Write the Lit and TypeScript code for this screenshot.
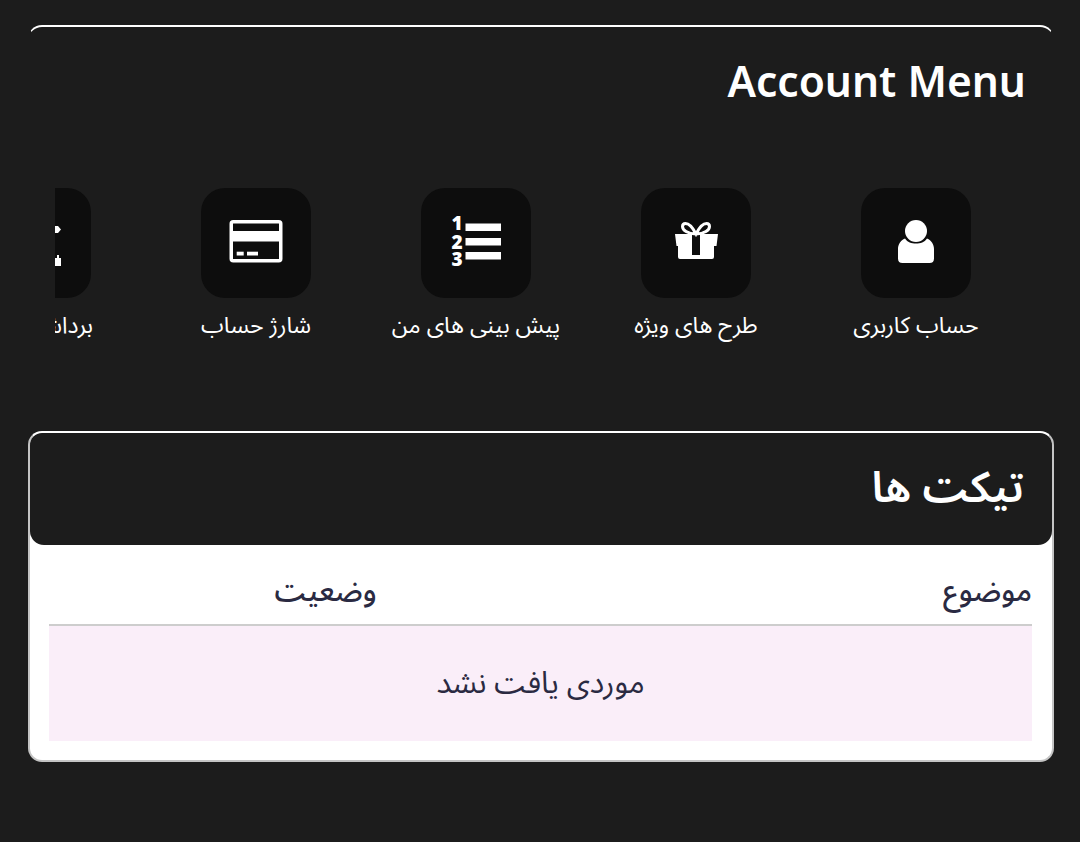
import { LitElement, html, css, svg } from "lit";
import { customElement } from "lit/decorators.js";

const userIcon = svg`<svg class="ic" width="110" height="110" viewBox="0 0 110 110"><circle cx="55" cy="43" r="11" fill="#fff"/><path d="M44 50.500C46.500 54.500 50.500 55.500 55 55.500s8.500-1 11-5C70.500 52.500 73 56.500 73 61v9.500c0 3-1.500 4.500-4.500 4.500h-27c-3 0-4.500-1.500-4.500-4.500V61c0-4.500 2.500-8.500 7-10.500z" fill="#fff"/></svg>`;
const giftIcon = svg`<svg class="ic" width="110" height="110" viewBox="0 0 110 110"><path d="M34 46h43l-1.500 12H73v11a2 2 0 0 1-2 2H39a2 2 0 0 1-2-2V58h-1.500z" fill="#fff"/><rect x="51" y="47" width="8" height="20" fill="#0d0d0d"/><path d="M55 46C51 38 47 35.500 44.500 35.500 42.500 35.500 41.500 37 41.500 38.500c0 3.500 5 7.500 13.500 7.500 8.500 0 13.500-4 13.500-7.500 0-1.500-1-3-3-3C63 35.500 59 38 55 46z" fill="none" stroke="#fff" stroke-width="3"/></svg>`;
const listIcon = svg`<svg class="ic" width="110" height="110" viewBox="0 0 110 110"><g fill="#fff"><rect x="44.500" y="35.500" width="35.500" height="7.500"/><rect x="44.500" y="50" width="35.500" height="7.500"/><rect x="44.500" y="64" width="35.500" height="7.500"/><text class="num" x="36" y="42" text-anchor="middle">1</text><text class="num" x="36" y="60.500" text-anchor="middle">2</text><text class="num" x="36" y="78" text-anchor="middle">3</text></g></svg>`;
const cardIcon = svg`<svg class="ic" width="110" height="110" viewBox="0 0 110 110"><rect x="30.250" y="33.750" width="49.500" height="39" rx="2" fill="none" stroke="#fff" stroke-width="3.500"/><rect x="30" y="43" width="50" height="10.500" fill="#fff"/><rect x="35.700" y="63.700" width="7" height="3.800" fill="#fff"/><rect x="46" y="63.700" width="11" height="3.800" fill="#fff"/></svg>`;
const wdIcon = svg`<svg class="ic" width="110" height="110" viewBox="0 0 110 110"><g fill="#fff"><path d="M74 38h3l3 3.500-3 3.500h-3z"/><path d="M74 70h2v-3h2v3h2v8h-6z"/></g></svg>`;

const items = [
  { label: "حساب کاربری", icon: userIcon },
  { label: "طرح های ویژه", icon: giftIcon },
  { label: "پیش بینی های من", icon: listIcon },
  { label: "شارژ حساب", icon: cardIcon },
  { label: "برداشت پول", icon: wdIcon },
];

@customElement("app-root")
export class AppRoot extends LitElement {
  static styles = css`
    :host {
      display: block;
      height: 842px;
      background: #1c1c1c;
      font-family: "Noto Sans Arabic", "DejaVu Sans", sans-serif;
      overflow: hidden;
    }
    .page { padding: 25px 26px 0 28px; }
    .menu {
      border-style: solid;
      border-color: transparent;
      border-width: 2px 1px 0;
      border-top-color: #fff;
      border-radius: 14px;
      padding: 0 1px;
      height: 386px;
      box-sizing: border-box;
      display: flex;
      flex-direction: column;
    }
    .title {
      margin: 0;
      padding: 24px 26px 0 0;
      height: 161px;
      box-sizing: border-box;
      text-align: right;
      color: #fff;
      font: 600 42.500px/60px "Noto Sans", sans-serif;
    }
    .scroller {
      margin: 0 26px 0 25px;
      padding-bottom: 16px;
      display: flex;
      direction: rtl;
      overflow: hidden;
    }
    .item {
      flex: 0 0 220px;
      display: flex;
      flex-direction: column;
      align-items: center;
      gap: 13px;
      color: #fff;
      font-size: 23px;
      line-height: 30px;
    }
    .box {
      width: 110px;
      height: 110px;
      background: #0d0d0d;
      border-radius: 24px;
      overflow: hidden;
    }
    .ic { display: block; }
    .num { font: 800 19px "Open Sans", sans-serif; }
    .label { white-space: nowrap; }
    .tickets {
      margin-top: 20px;
      border: 2px solid #c4c4c4;
      border-top-color: #fff;
      border-radius: 14px;
      background: #fff;
      height: 331px;
      box-sizing: border-box;
      overflow: hidden;
    }
    .thead {
      height: 112px;
      box-sizing: border-box;
      background: #1c1c1c;
      border-radius: 0 0 14px 14px;
      color: #fff;
      direction: rtl;
      padding: 0 28px;
      font-size: 43px;
      line-height: 112px;
      font-weight: 600;
    }
    .tbody { padding: 0 20px 0 19px; direction: rtl; color: #2a2a42; }
    .cols {
      display: grid;
      grid-template-columns: 1fr 1fr 1fr;
      height: 81px;
      padding-top: 14px;
      align-items: center;
      font-size: 30px;
      line-height: 38px;
      font-weight: 500;
      border-bottom: 2px solid #cdcdcd;
      box-sizing: border-box;
    }
    .empty {
      height: 115px;
      padding-bottom: 2px;
      box-sizing: border-box;
      background: #faeef9;
      display: flex;
      align-items: center;
      justify-content: center;
      font-size: 30.300px;
    }
  `;

  render() {
    return html`<div class="page">
      <section class="menu">
        <h1 class="title">Account Menu</h1>
        <div class="scroller">
          ${items.map(
            (i) => html`<div class="item">
              <div class="box">${i.icon}</div>
              <div class="label">${i.label}</div>
            </div>`
          )}
        </div>
      </section>
      <section class="tickets">
        <div class="thead">تیکت ها</div>
        <div class="tbody">
          <div class="cols"><span>موضوع</span><span></span><span>وضعیت</span></div>
          <div class="empty">موردی یافت نشد</div>
        </div>
      </section>
    </div>`;
  }
}
